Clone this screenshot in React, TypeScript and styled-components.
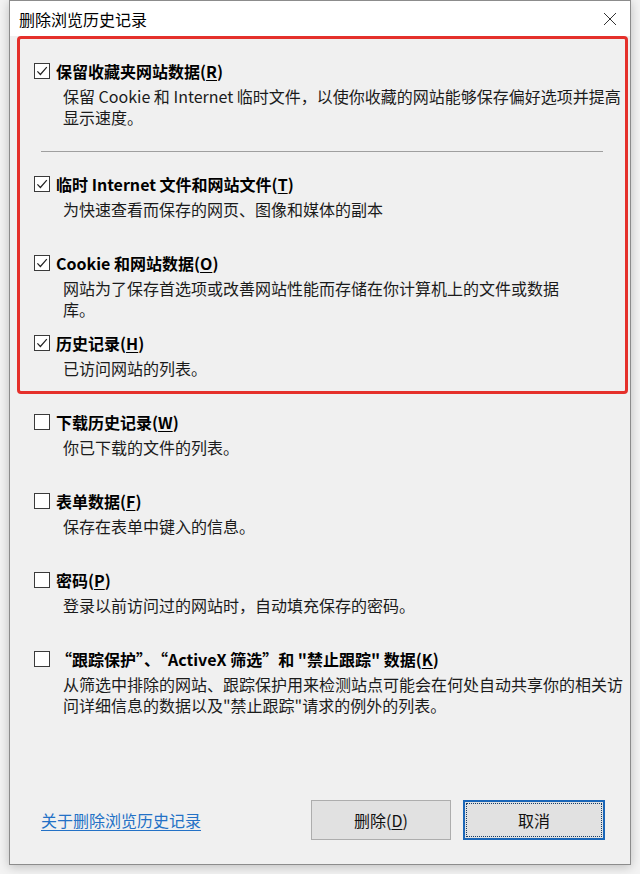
import React from 'react';
import styled, { createGlobalStyle } from 'styled-components';

const GlobalStyle = createGlobalStyle`
  html, body {
    margin: 0;
    padding: 0;
    background: #f3f3f3;
  }
  body {
    font-family: "Noto Sans CJK SC", "Microsoft YaHei", "Liberation Sans", sans-serif;
    color: #000;
  }
`;

const Page = styled.div`
  height: 874px;
  padding-left: 9px;
  box-sizing: border-box;
  overflow: hidden;
`;

const Dialog = styled.div`
  width: 622px;
  height: 865px;
  box-sizing: border-box;
  border: 1px solid #8c8c8c;
  background: #f0f0f0;
  display: flex;
  flex-direction: column;
  box-shadow: 0 2px 10px rgba(0, 0, 0, 0.22);
`;

const TitleBar = styled.div`
  height: 35px;
  flex: none;
  background: #fff;
  display: flex;
  align-items: center;
  justify-content: space-between;
  padding: 0 13px 0 9px;
  font-size: 16px;
  line-height: 20px;
`;

const CloseButton = styled.div`
  width: 14px;
  height: 14px;
  display: flex;
  margin-top: 1px;
`;

const Body = styled.div`
  flex: 1;
  display: flex;
  flex-direction: column;
  padding: 0 1px 0 7px;
`;

const Highlight = styled.div`
  width: 611px;
  box-sizing: border-box;
  border: 3px solid #e5302b;
  border-radius: 4px;
  padding: 21px 0 12px 14px;
`;

const Plain = styled.div`
  padding-left: 17px;
`;

const Option = styled.div<{ $gap: number }>`
  margin-top: ${(p) => p.$gap}px;
`;

const LabelRow = styled.label`
  display: flex;
  align-items: center;
  gap: 6px;
  height: 22px;
  font-size: 16px;
  font-weight: 700;
  line-height: 22px;
  white-space: nowrap;
`;

const Box = styled.span`
  width: 16px;
  height: 16px;
  box-sizing: border-box;
  border: 1px solid #3a3a3a;
  background: #fff;
  display: flex;
  flex: none;
`;

const Key = styled.span`
  text-decoration: underline;
  text-underline-offset: 2px;
`;

const Desc = styled.div`
  margin: 4px 0 0 29px;
  font-size: 16px;
  line-height: 21px;
  color: #1b1b1b;
  white-space: nowrap;
`;

const Divider = styled.div`
  height: 1px;
  background: #9f9f9f;
  margin: 23px 22px 0 7px;
`;

const Footer = styled.div`
  margin-top: auto;
  display: flex;
  align-items: center;
  padding: 0 24px 24px 24px;
`;

const HelpLink = styled.a`
  flex: 1;
  font-size: 16px;
  color: #2371c6;
  text-decoration: underline;
  text-underline-offset: 3px;
  cursor: pointer;
`;

const Button = styled.button<{ $primary?: boolean }>`
  position: relative;
  width: ${(p) => (p.$primary ? 142 : 140)}px;
  height: 40px;
  margin-left: ${(p) => (p.$primary ? 12 : 0)}px;
  box-sizing: border-box;
  background: #e1e1e1;
  border: ${(p) => (p.$primary ? '2px solid #1a66b8' : '1px solid #adadad')};
  font-family: inherit;
  font-size: 16px;
  color: #111;
  padding: 0;

  ${(p) =>
    p.$primary &&
    `
    &::after {
      content: '';
      position: absolute;
      inset: 1px;
      border: 1px dotted #163d66;
    }
  `}
`;

const Check = () => (
  <svg width="14" height="14" viewBox="0 0 14 14">
    <path d="M2.4 7.4 L5.4 10.5 L11.8 3.2" fill="none" stroke="#222" strokeWidth="1.2" />
  </svg>
);

interface ItemProps {
  gap: number;
  checked?: boolean;
  label: React.ReactNode;
  lines: string[];
}

const Item = ({ gap, checked, label, lines }: ItemProps) => (
  <Option $gap={gap}>
    <LabelRow>
      <Box>{checked && <Check />}</Box>
      <span>{label}</span>
    </LabelRow>
    <Desc>
      {lines.map((line, i) => (
        <div key={i}>{line}</div>
      ))}
    </Desc>
  </Option>
);

export default function App() {
  return (
    <Page>
      <GlobalStyle />
      <Dialog>
        <TitleBar>
          <span>删除浏览历史记录</span>
          <CloseButton>
            <svg width="14" height="14" viewBox="0 0 14 14">
              <path d="M1 1 L13 13 M13 1 L1 13" stroke="#333" strokeWidth="1" fill="none" />
            </svg>
          </CloseButton>
        </TitleBar>
        <Body>
          <Highlight>
            <Item
              gap={0}
              checked
              label={<>保留收藏夹网站数据(<Key>R</Key>)</>}
              lines={['保留 Cookie 和 Internet 临时文件，以使你收藏的网站能够保存偏好选项并提高', '显示速度。']}
            />
            <Divider />
            <Item
              gap={21}
              checked
              label={<>临时 Internet 文件和网站文件(<Key>T</Key>)</>}
              lines={['为快速查看而保存的网页、图像和媒体的副本']}
            />
            <Item
              gap={32}
              checked
              label={<>Cookie 和网站数据(<Key>O</Key>)</>}
              lines={['网站为了保存首选项或改善网站性能而存储在你计算机上的文件或数据', '库。']}
            />
            <Item
              gap={12}
              checked
              label={<>历史记录(<Key>H</Key>)</>}
              lines={['已访问网站的列表。']}
            />
          </Highlight>
          <Plain>
            <Item
              gap={17}
              label={<>下载历史记录(<Key>W</Key>)</>}
              lines={['你已下载的文件的列表。']}
            />
            <Item
              gap={32}
              label={<>表单数据(<Key>F</Key>)</>}
              lines={['保存在表单中键入的信息。']}
            />
            <Item
              gap={32}
              label={<>密码(<Key>P</Key>)</>}
              lines={['登录以前访问过的网站时，自动填充保存的密码。']}
            />
            <Item
              gap={32}
              label={<>“跟踪保护”、“ActiveX 筛选”和 "禁止跟踪" 数据(<Key>K</Key>)</>}
              lines={[
                '从筛选中排除的网站、跟踪保护用来检测站点可能会在何处自动共享你的相关访',
                '问详细信息的数据以及"禁止跟踪"请求的例外的列表。',
              ]}
            />
          </Plain>
          <Footer>
            <HelpLink>关于删除浏览历史记录</HelpLink>
            <Button>删除(<Key>D</Key>)</Button>
            <Button $primary>取消</Button>
          </Footer>
        </Body>
      </Dialog>
    </Page>
  );
}
